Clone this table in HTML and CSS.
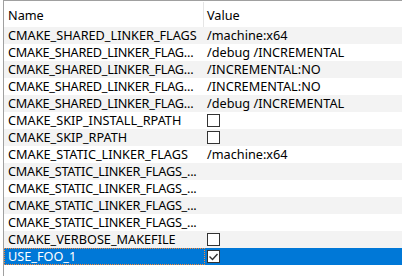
FILE: index.html
```html
<!DOCTYPE html>
<html>
<head>
<meta charset="utf-8">
<link rel="stylesheet" href="styles.css">
</head>
<body>
<div class="view">
  <div class="head">
    <div class="hcell name">Name</div>
    <div class="hcell value">Value</div>
  </div>
  <div class="rows">
    <div class="row"><div class="name">CMAKE_SHARED_LINKER_FLAGS</div><div class="value">/machine:x64</div></div>
    <div class="row"><div class="name cut">CMAKE_SHARED_LINKER_FLAG...</div><div class="value">/debug /INCREMENTAL</div></div>
    <div class="row"><div class="name cut">CMAKE_SHARED_LINKER_FLAG...</div><div class="value">/INCREMENTAL:NO</div></div>
    <div class="row"><div class="name cut">CMAKE_SHARED_LINKER_FLAG...</div><div class="value">/INCREMENTAL:NO</div></div>
    <div class="row"><div class="name cut">CMAKE_SHARED_LINKER_FLAG...</div><div class="value">/debug /INCREMENTAL</div></div>
    <div class="row"><div class="name">CMAKE_SKIP_INSTALL_RPATH</div><div class="value"><span class="check"></span></div></div>
    <div class="row"><div class="name">CMAKE_SKIP_RPATH</div><div class="value"><span class="check"></span></div></div>
    <div class="row"><div class="name">CMAKE_STATIC_LINKER_FLAGS</div><div class="value">/machine:x64</div></div>
    <div class="row"><div class="name cut">CMAKE_STATIC_LINKER_FLAGS_...</div><div class="value"></div></div>
    <div class="row"><div class="name cut">CMAKE_STATIC_LINKER_FLAGS_...</div><div class="value"></div></div>
    <div class="row"><div class="name cut">CMAKE_STATIC_LINKER_FLAGS_...</div><div class="value"></div></div>
    <div class="row"><div class="name cut">CMAKE_STATIC_LINKER_FLAGS_...</div><div class="value"></div></div>
    <div class="row"><div class="name">CMAKE_VERBOSE_MAKEFILE</div><div class="value"><span class="check"></span></div></div>
    <div class="row selected"><div class="name focus">USE_FOO_1</div><div class="value"><span class="check checked"><svg width="11" height="11" viewBox="0 0 11 11"><path d="M1.5 5.5 L4.5 8.5 L9.5 3" fill="none" stroke="#333" stroke-width="1.4"/></svg></span></div></div>
  </div>
</div>
</body>
</html>
```

FILE: styles.css
```css
html, body {
  margin: 0;
  padding: 0;
  background: #ffffff;
}

body {
  font-family: "Noto Sans", "Segoe UI", sans-serif;
  font-size: 12.7px;
  color: #000000;
}

.view {
  margin-left: 3px;
  height: 275px;
  border-top: 1px solid #a0a0a0;
  border-left: 1px solid #a0a0a0;
}

.head {
  display: grid;
  grid-template-columns: 200px 1fr;
  height: 25px;
  margin-top: 1px;
}

.hcell {
  display: flex;
  align-items: center;
  padding-left: 4px;
  white-space: nowrap;
}

.hcell.name {
  border-right: 1px solid #e5e5e5;
}

.hcell.value {
  padding-left: 3px;
}

.row {
  display: grid;
  grid-template-columns: 201px 1fr;
  height: 17px;
  line-height: 17px;
  white-space: nowrap;
}

.row:nth-child(odd) {
  background: #f3f3f3;
}

.row .name {
  padding-left: 4px;
  overflow: hidden;
}

/* names shortened to fit the column */
.row .name.cut {
  letter-spacing: -0.25px;
}

.row .value {
  padding-left: 2px;
  display: flex;
  align-items: center;
}

.row.selected {
  background: #0078d7;
  color: #ffffff;
}

.focus {
  outline: 1px dotted #f7883a;
  outline-offset: -1px;
}

.check {
  display: inline-block;
  box-sizing: border-box;
  width: 13px;
  height: 13px;
  border: 1px solid #333333;
  background: #ffffff;
  position: relative;
}

.check svg {
  position: absolute;
  left: 0;
  top: 0;
}
```
